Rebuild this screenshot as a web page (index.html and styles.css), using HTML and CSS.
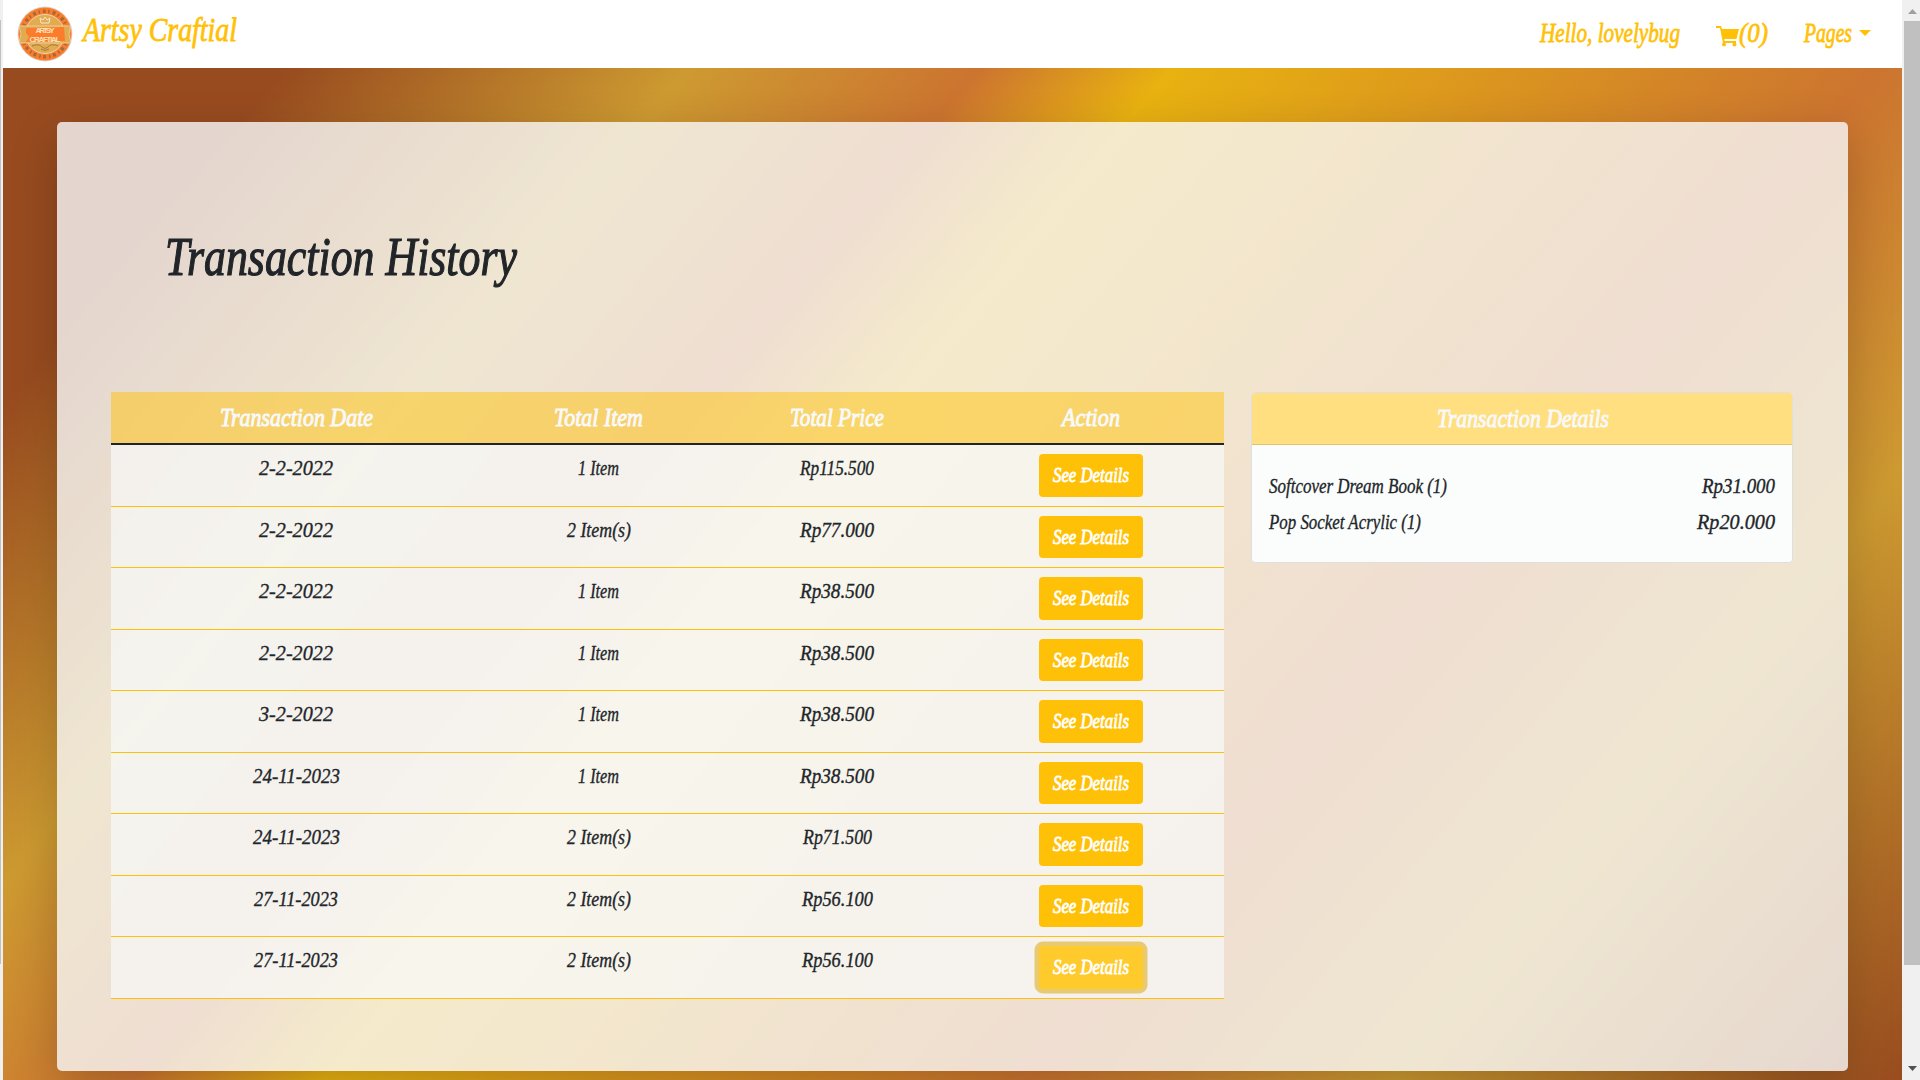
FILE: index.html
```html
<!DOCTYPE html>
<html lang="en"><head><meta charset="utf-8"><title>Artsy Craftial</title>
<link rel="stylesheet" href="styles.css"></head>
<body>
<div class="left-edge"><i></i></div>
<div class="page">
<nav class="navbar">
<a class="brand">
<svg class="logo" viewBox="0 0 56 56"><circle cx="28" cy="28" r="27.4" fill="#dcd3cb"/><circle cx="28" cy="28" r="26.5" fill="#fb7d2b"/><circle cx="28" cy="28" r="22.8" fill="none" stroke="#a56a3c" stroke-width="3.500" stroke-dasharray="1.500 3 3 2.500"/><circle cx="28" cy="28" r="19.500" fill="#e2ab50" stroke="#eed5ad"/><path d="M2 20h52l-2 8 2 9H2l2-9z" fill="#e2ab50" stroke="#eed5ad" stroke-width=".8"/><path d="M9 22l38-1 1 14-39 1 3-5-3-4z" fill="#fb7d2b"/><path d="M24 17l-1-5 3 2 2-3 2 3 3-2-1 5z" fill="none" stroke="#f6e7cf"/><path d="M15 40q7-3 10 1 3 3 6 0 3-4 10-1M24 43q4 3 8 0" fill="none" stroke="#9c7440" stroke-width=".9"/><text x="28" y="27.3" class="logo-text" textLength="19">ARTSY</text><text x="28" y="36" class="logo-text" textLength="31">CRAFTIAL</text></svg>
<svg class="t brand-name" width="158" height="40"><text x="0" y="28" textLength="154" lengthAdjust="spacingAndGlyphs">Artsy Craftial</text></svg></a>
<div class="links">
<svg class="t nav-text" width="142" height="40"><text x="0" y="28" textLength="140" lengthAdjust="spacingAndGlyphs">Hello, lovelybug</text></svg>
<span class="cart"><svg width="23" height="21" viewBox="0 0 23 21"><path d="M0 0h5l1 3h17l-2.500 10H8.300l.4 2H20v2H7L4 2H0z" fill="#ffc107"/><circle cx="8" cy="18.500" r="2" fill="#ffc107"/><circle cx="18.500" cy="18.500" r="2" fill="#ffc107"/></svg><svg class="t nav-text" width="30" height="40"><text x="0" y="28" textLength="29" lengthAdjust="spacingAndGlyphs">(0)</text></svg></span>
<span class="pages"><svg class="t nav-text" width="50" height="40"><text x="1" y="28" textLength="48" lengthAdjust="spacingAndGlyphs">Pages</text></svg><i class="caret"></i></span>
</div></nav>
<main class="backdrop"><section class="card">
<h1><svg class="t" width="360" height="80"><text x="1" y="45" textLength="352" lengthAdjust="spacingAndGlyphs">Transaction History</text></svg></h1>
<div class="columns">
<div class="table" id="table"></div>
<aside class="details"><h2><svg class="t" width="172" height="40"><text x="1" y="27" textLength="172" lengthAdjust="spacingAndGlyphs">Transaction Details</text></svg></h2>
<div class="items" id="items"></div></aside>
</div></section></main>
</div>
<div class="scrollbar"><svg width="9" height="5"><path d="M0 5l4.500-5L9 5z" fill="#a0a0a0"/></svg><i></i><svg class="down" width="9" height="5"><path d="M0 0h9L4.500 5z" fill="#505050"/></svg></div>
<script src="app.js"></script>
</body></html>
```
FILE: styles.css
```css
*{box-sizing:border-box}
body{margin:0;height:1080px;overflow:hidden;display:flex;background:#f0f0f0;font-family:"Liberation Serif",serif;font-style:italic;color:#212529}
.left-edge{width:3px;padding:20px 0 116px;background:#f0f0f0;display:flex}
.left-edge i{width:1px;background:#c0c0c0}
.page{width:1899px;display:flex;flex-direction:column}
.t{display:block;overflow:visible;fill:currentColor}
.navbar{height:68px;background:#fff;display:flex;justify-content:space-between;color:#ffc107;padding:0 31px 0 14px}
.brand{display:flex;padding-top:6px;gap:10px}
.logo{width:56px;height:56px}
.logo-text{font:bold 8px "Liberation Sans",sans-serif;text-anchor:middle;fill:#ffe0b5}
.brand-name{margin-top:7px;font-size:33px;stroke:currentColor;stroke-width:.8px}
.links{display:flex;padding-top:14px;gap:34px}
.nav-text{font-size:27px;stroke:currentColor;stroke-width:.8px}
.cart{display:flex}
.cart>svg:first-child{margin-top:12px}
.pages{display:flex;gap:6px}
.caret{border:6px solid transparent;border-top-color:#ffc107;border-bottom:0;height:6px;margin-top:16px}
.backdrop{flex:1;padding:54px 54px 9px;background:linear-gradient(130deg,#984b1f 216px,#cd9a31 525px,#cc7430 748px,#e8b210 895px,#cc7430 1438px,#cd9a31 1715px,#984b1f 2110px)}
.card{height:949px;border-radius:5px;background:rgba(248,249,250,.8);padding:108px 54px 0;box-shadow:0 16px 48px rgba(0,0,0,.2)}
h1{margin:0 0 0 53px;height:162px;font-size:54px;font-weight:400;stroke:currentColor;stroke-width:1.2px}
.columns{display:flex;gap:27px;align-items:flex-start}
.table{width:1113px}
.row{display:grid;grid-template-columns:370px 235px 242px 1fr;justify-items:center;height:62px;background:rgba(248,249,250,.7);border-bottom:1px solid #ffc107;font-size:21px;stroke:currentColor;stroke-width:.35px}
.row:nth-child(odd){height:61px}
.row>*{margin-top:8px}
.row>.button{margin-top:9px}
.row.head{height:53px;background:rgba(255,193,7,.5);border-bottom:2px solid #212529;color:#f8f9fa;font-size:26px;stroke-width:1px}
.row.head>*{margin-top:7px}
.button{width:104px;height:43px;background:#ffc107;border-radius:4px;color:#fff;display:flex;justify-content:center;padding-top:6px;stroke-width:.8px}
.row:nth-child(odd) .button{height:42px}
.button.active{background:#ffca2c;box-shadow:0 0 0 4.500px #e8ca72}
.details{width:542px;height:171px;background:#fbfdfc;border:1px solid #dfdfdf;border-radius:4px}
h2{margin:0;height:52px;background:#ffdf80;border-bottom:1px solid #dfc571;border-radius:3px 3px 0 0;color:#f8f9fa;font-weight:400;font-size:26px;stroke:currentColor;stroke-width:1px;display:flex;justify-content:center;padding-top:7px}
.items{padding:26px 17px 0;font-size:21px;stroke:currentColor;stroke-width:.35px}
.item{display:flex;justify-content:space-between;height:36px}
.scrollbar{width:18px;display:flex;flex-direction:column;align-items:center;padding:9px 0 9px 2px;background:#f0f0f0}
.scrollbar svg{display:block;flex:none}
.scrollbar i{width:16px;height:944px;margin-top:7px;background:#c0c0c0}
.scrollbar .down{margin-top:auto}
```
FILE: app.js
```js
const text = (value, width) =>
  `<svg class="t" width="${width}" height="36"><text x="0" y="22" textLength="${width}" lengthAdjust="spacingAndGlyphs">${value}</text></svg>`;
const head = [["Transaction Date",153],["Total Item",89],["Total Price",94],["Action",58]];
const rows = [
  ["2-2-2022",74,"1 Item",41,"Rp115.500",74],
  ["2-2-2022",74,"2 Item(s)",64,"Rp77.000",74],
  ["2-2-2022",74,"1 Item",41,"Rp38.500",74],
  ["2-2-2022",74,"1 Item",41,"Rp38.500",74],
  ["3-2-2022",74,"1 Item",41,"Rp38.500",74],
  ["24-11-2023",87,"1 Item",41,"Rp38.500",74],
  ["24-11-2023",87,"2 Item(s)",64,"Rp71.500",69],
  ["27-11-2023",84,"2 Item(s)",64,"Rp56.100",71],
  ["27-11-2023",84,"2 Item(s)",64,"Rp56.100",71]
];
document.getElementById("table").innerHTML =
  `<div class="row head">${head.map(([v,w]) => text(v,w).replace('y="22"','y="27"')).join("")}</div>` +
  rows.map((r,i) => `<div class="row">${text(r[0],r[1])}${text(r[2],r[3])}${text(r[4],r[5])}<span class="button${i === 8 ? " active" : ""}">${text("See Details",76)}</span></div>`).join("");
document.getElementById("items").innerHTML =
  [["Softcover Dream Book (1)",178,"Rp31.000",73],["Pop Socket Acrylic (1)",152,"Rp20.000",78]]
  .map(r => `<div class="item">${text(r[0],r[1])}${text(r[2],r[3])}</div>`).join("");
```
